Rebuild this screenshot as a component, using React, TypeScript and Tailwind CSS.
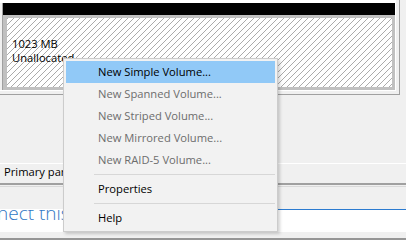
export default function App() {
  const items: { label: string; disabled?: boolean; active?: boolean; sep?: boolean }[] = [
    { label: "New Simple Volume...", active: true },
    { label: "New Spanned Volume...", disabled: true },
    { label: "New Striped Volume...", disabled: true },
    { label: "New Mirrored Volume...", disabled: true },
    { label: "New RAID-5 Volume...", disabled: true },
    { label: "", sep: true },
    { label: "Properties" },
    { label: "", sep: true },
    { label: "Help" },
  ];
  return (
    <div className="relative w-[406px] h-[240px] overflow-hidden bg-[#f0f0f0] [font-family:'Open_Sans',sans-serif] text-[11.2px] text-black">
      {/* disk panel */}
      <div className="w-[400px] h-[95px] border-r border-b border-[#a0a0a0]">
        <div className="w-[396px] h-[91px] border-t-[3px] border-r border-b border-white pl-[2px]">
          <div className="h-full border-l border-[#a0a0a0]">
            <div className="w-full h-[12px] bg-black" />
            <div className="w-full h-[75px] bg-[#c0c0c0] pt-[3px] pb-[3px] pl-[4px] pr-[3px]">
              <div className="h-full bg-white bg-[image:repeating-linear-gradient(135deg,#ababab_0px,#ababab_0.9px,#ffffff_0.9px,#ffffff_4.243px)] pl-[5px] pt-[19px] leading-[14px]">
                <div>1023 MB</div>
                <div>Unallocated</div>
              </div>
            </div>
          </div>
        </div>
      </div>
      {/* lower area */}
      <div className="h-[68px]" />
      <div className="h-px bg-white" />
      <div className="h-[19px] pl-[4px] leading-[15px] whitespace-nowrap">Primary partition</div>
      <div className="h-[2px] bg-[#a0a0a0]" />
      <div className="h-px" />
      <div className="h-px bg-[#d9d9d9]" />
      <div className="h-[22px]" />
      <div className="flex h-[23px]">
        <div className="w-[63px] bg-white pt-px">
          <div className="h-[22px] overflow-hidden">
            <div className="mt-[-6px] ml-[-3px] text-[19px] leading-[19px] font-light text-[#2f77c4] whitespace-nowrap">
              nect this
            </div>
          </div>
        </div>
        <div className="flex-1 bg-white border-t border-[#2b7bd0]" />
      </div>
      <div className="h-[6px]" />
      <div className="h-[2px] bg-[#969696]" />

      {/* context menu */}
      <div className="absolute left-[63px] top-[58px] w-[215px] bg-[#f2f2f2] border border-[#cccccc] p-[2px] shadow-[2px_2px_3px_rgba(0,0,0,0.18)]">
        {items.map((it, i) =>
          it.sep ? (
            <div key={i} className="h-[7px] flex items-center pl-[28px]">
              <div className="h-px w-full bg-[#d7d7d7]" />
            </div>
          ) : (
            <div
              key={i}
              className={
                "h-[22px] flex items-center pl-[32px] whitespace-nowrap " +
                (it.active ? "bg-[#91c9f7] " : "") +
                (it.disabled ? "text-[#6d6d6d]" : "text-black")
              }
            >
              {it.label}
            </div>
          )
        )}
      </div>
    </div>
  );
}
